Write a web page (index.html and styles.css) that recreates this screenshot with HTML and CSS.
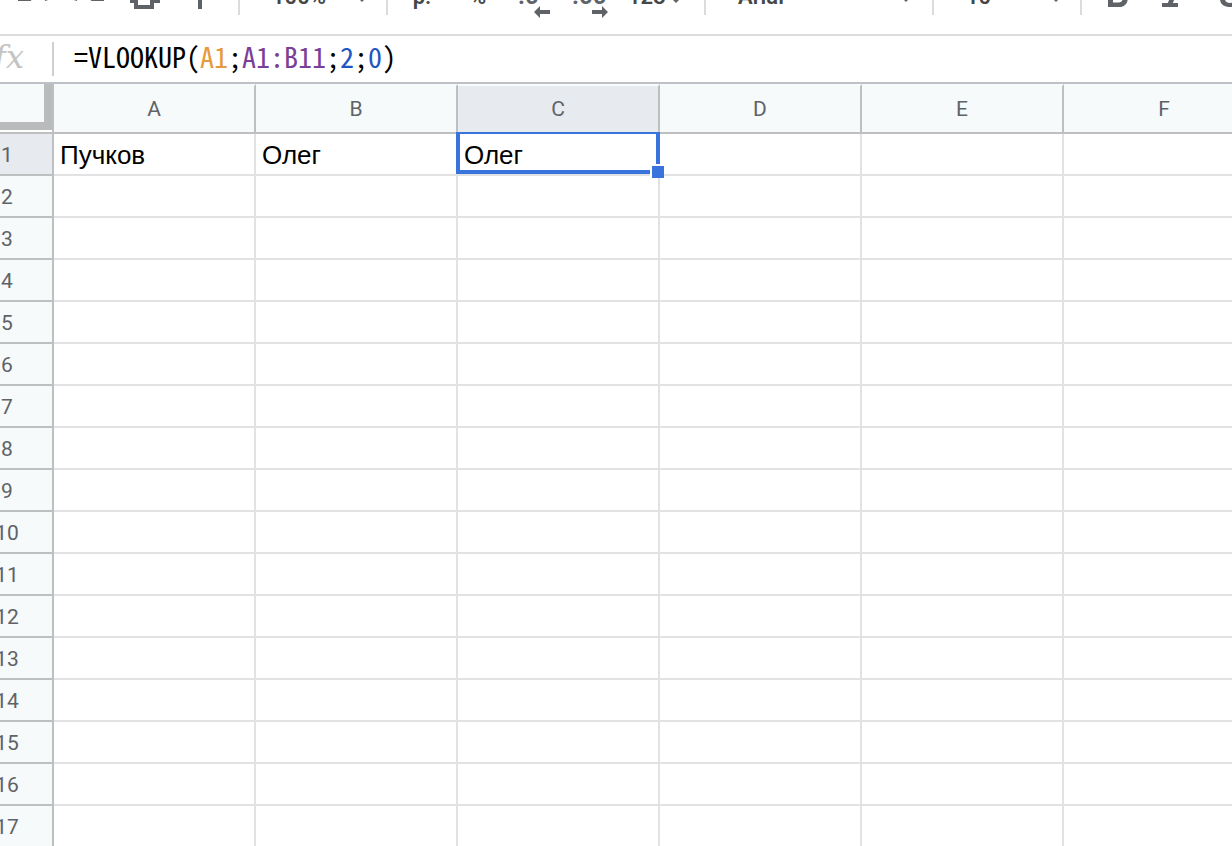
FILE: index.html
```html
<!DOCTYPE html>
<html lang="ru">
<head>
  <meta charset="UTF-8" />
  <meta name="viewport" content="width=device-width, initial-scale=1.0" />
  <title>Таблица</title>
  <link rel="stylesheet" href="styles.css">
</head>
<body>
  <div class="app">

    <!-- Toolbar -->
    <div class="toolbar" role="toolbar">
      <div class="group group-edit">
        <button class="icon-btn" aria-label="Отменить">
          <svg viewBox="0 0 24 24"><path d="M12.5 8c-2.65 0-5.05.99-6.9 2.6L2 7v9h9l-3.62-3.62c1.39-1.16 3.16-1.88 5.12-1.88 3.54 0 6.55 2.31 7.6 5.5l2.37-.78C21.08 11.03 17.15 8 12.5 8z"/></svg>
        </button>
        <button class="icon-btn" aria-label="Повторить">
          <svg viewBox="0 0 24 24"><path d="M18.4 10.6C16.55 8.99 14.15 8 11.5 8c-4.65 0-8.58 3.03-9.96 7.22L3.9 16c1.05-3.19 4.05-5.5 7.6-5.5 1.95 0 3.73.72 5.12 1.88L13 16h9V7l-3.6 3.6z"/></svg>
        </button>
        <button class="icon-btn" aria-label="Печать">
          <svg viewBox="0 0 36 36"><path fill-rule="evenodd" d="M9 4h18v6H9zM7 12h22c2.500 0 4 2 4 4v10h-6v6H7v-6H3V16c0-2 1.500-4 4-4zm4 8v8h12v-8z"/></svg>
        </button>
        <button class="icon-btn" aria-label="Копировать форматирование">
          <svg viewBox="0 0 36 36"><path d="M5 4h20v3h6v12H19v13h-4V16h13v-6h-3v4H5z"/></svg>
        </button>
      </div>
      <div class="group group-picker">
        <select class="picker" aria-label="Масштаб"><option>100%</option></select>
        <svg class="caret" viewBox="0 0 12 12"><path d="M0 6h12l-6 6z"/></svg>
      </div>
      <div class="group group-format">
        <button class="text-btn">р.</button>
        <button class="text-btn">%</button>
        <button class="text-btn" aria-label="Уменьшить число знаков">
          <span class="decimals">.0<svg class="arrow" viewBox="0 0 16 12"><path d="M0 6l6-6v4h10v4H6v4z"/></svg></span>
        </button>
        <button class="text-btn" aria-label="Увеличить число знаков">
          <span class="decimals decimals-more">.00<svg class="arrow" viewBox="0 0 16 12"><path d="M16 6l-6-6v4H0v4h10v4z"/></svg></span>
        </button>
        <button class="menu-btn">123<svg class="caret" viewBox="0 0 12 12"><path d="M0 6h12l-6 6z"/></svg></button>
      </div>
      <div class="group group-font">
        <select class="picker" aria-label="Шрифт"><option>Arial</option></select>
        <svg class="caret" viewBox="0 0 12 12"><path d="M0 6h12l-6 6z"/></svg>
      </div>
      <div class="group group-picker">
        <select class="picker" aria-label="Размер шрифта"><option>10</option></select>
        <svg class="caret" viewBox="0 0 12 12"><path d="M0 6h12l-6 6z"/></svg>
      </div>
      <div class="group group-style">
        <button class="icon-btn" aria-label="Полужирный">
          <svg viewBox="0 0 18 18"><path fill-rule="evenodd" d="M4 2h5.3c2.3 0 4 1.300 4 3.300 0 1.200-.6 2.200-1.500 2.700 1.200.5 2 1.600 2 3.100C13.800 13.500 12 15 9.700 15H4zM6.500 4.200v2.900H9c1 0 1.700-.6 1.700-1.500S10 4.200 9 4.200zm0 5v3.500h2.900c1.100 0 1.900-.7 1.900-1.700s-.8-1.800-1.900-1.800z"/></svg>
        </button>
        <button class="icon-btn" aria-label="Курсив">
          <svg viewBox="0 0 18 18"><path d="M7 2v2h2.580l-3.660 9H3v2h8v-2H8.420l3.660-9H15V2z"/></svg>
        </button>
        <button class="icon-btn" aria-label="Зачеркнутый">
          <svg viewBox="0 0 18 18"><path d="M2 8h14v2H2zM9 2c3 0 5 1.500 5 4h-2.500c0-1.200-1-2-2.500-2S6.600 4.600 6.600 5.500 7.500 7 9 7H4.500C3 4.500 5.500 2 9 2zM4 11h2.500c0 1.300 1 2 2.700 2 1.500 0 2.500-.6 2.500-2h2.400c0 2.600-2 4-4.900 4C6 15 4 13.500 4 11z"/></svg>
        </button>
      </div>
    </div>

    <!-- Formula bar -->
    <div class="formula-bar">
      <span class="fx">fx</span>
      <div class="formula" role="textbox" contenteditable="true" spellcheck="false" aria-label="Формула">=VLOOKUP(<span class="ref-orange">A1</span>;<span class="ref-purple">A1:B11</span>;<span class="number">2</span>;<span class="number">0</span>)</div>
    </div>

    <!-- Sheet -->
    <table class="sheet">
      <thead>
        <tr>
          <th class="corner"></th>
          <th>A</th><th>B</th><th class="active">C</th><th>D</th><th>E</th><th>F</th>
        </tr>
      </thead>
      <tbody>
        <tr>
          <th class="active">1</th>
          <td>Пучков</td><td>Олег</td>
          <td class="selected">Олег<span class="selection"></span><span class="handle"></span></td>
          <td></td><td></td><td></td>
        </tr>
        <tr><th>2</th><td></td><td></td><td></td><td></td><td></td><td></td></tr>
        <tr><th>3</th><td></td><td></td><td></td><td></td><td></td><td></td></tr>
        <tr><th>4</th><td></td><td></td><td></td><td></td><td></td><td></td></tr>
        <tr><th>5</th><td></td><td></td><td></td><td></td><td></td><td></td></tr>
        <tr><th>6</th><td></td><td></td><td></td><td></td><td></td><td></td></tr>
        <tr><th>7</th><td></td><td></td><td></td><td></td><td></td><td></td></tr>
        <tr><th>8</th><td></td><td></td><td></td><td></td><td></td><td></td></tr>
        <tr><th>9</th><td></td><td></td><td></td><td></td><td></td><td></td></tr>
        <tr><th>10</th><td></td><td></td><td></td><td></td><td></td><td></td></tr>
        <tr><th>11</th><td></td><td></td><td></td><td></td><td></td><td></td></tr>
        <tr><th>12</th><td></td><td></td><td></td><td></td><td></td><td></td></tr>
        <tr><th>13</th><td></td><td></td><td></td><td></td><td></td><td></td></tr>
        <tr><th>14</th><td></td><td></td><td></td><td></td><td></td><td></td></tr>
        <tr><th>15</th><td></td><td></td><td></td><td></td><td></td><td></td></tr>
        <tr><th>16</th><td></td><td></td><td></td><td></td><td></td><td></td></tr>
        <tr><th>17</th><td></td><td></td><td></td><td></td><td></td><td></td></tr>
      </tbody>
    </table>

  </div>
</body>
</html>
```
FILE: styles.css
```css
* {
  box-sizing: border-box;
}

body {
  margin: 0;
  background: #fff;
  overflow: hidden;
}

/* the view is scrolled a little past the top left corner */
.app {
  margin: -44px 0 0 -38px;
  font-family: Roboto, sans-serif;
}

button,
select {
  padding: 2px 0 0;
  border: none;
  background: none;
  color: #444746;
  font: 600 22px Roboto, sans-serif;
  cursor: pointer;
}

/* Toolbar */
.toolbar {
  display: flex;
  align-items: center;
  height: 80px;
  border-bottom: 2px solid #dadcdd;
}

.group {
  display: flex;
  align-items: center;
  flex: none;
  height: 40px;
  border-right: 2px solid #dadce0;
}

.group-edit {
  width: 278px;
  padding-left: 53px;
  gap: 20px;
}

.group-picker {
  width: 148px;
  padding: 0 18px 0 32px;
}

.group-format {
  width: 318px;
  padding-left: 6px;
}

.group-font {
  width: 228px;
  padding: 0 20px 0 32px;
}

.group-style {
  padding-left: 18px;
  gap: 20px;
  border-right: none;
}

.icon-btn {
  flex: none;
  width: 36px;
  height: 36px;
  padding: 0;
}

.icon-btn svg {
  display: block;
  width: 36px;
  height: 36px;
  fill: #5f6368;
}

.picker {
  flex: 1;
  min-width: 0;
  appearance: none;
}

.caret {
  width: 12px;
  height: 12px;
  margin-top: 2px;
  fill: #5f6368;
}

.text-btn {
  width: 56px;
}

.menu-btn {
  display: flex;
  align-items: center;
  gap: 4px;
  padding-left: 10px;
}

.decimals {
  display: inline-block;
  position: relative;
  width: 32px;
  color: #5f6368;
  font-size: 24px;
  font-weight: 700;
  text-align: left;
}

.decimals-more {
  width: 36px;
}

.arrow {
  position: absolute;
  right: 0;
  bottom: -8px;
  width: 16px;
  height: 12px;
  fill: #5f6368;
}

/* Formula bar */
.formula-bar {
  display: flex;
  align-items: center;
  height: 48px;
  border-bottom: 2px solid #bdc1c6;
}

.fx {
  flex: none;
  width: 92px;
  height: 34px;
  padding-right: 28px;
  border-right: 2px solid #d0d0d0;
  color: #c4c4c4;
  font: italic 32px/30px "DejaVu Serif", serif;
  text-align: right;
}

.formula {
  flex: 1;
  padding: 0 0 6px 20px;
  color: #000;
  font: 28px/40px "Noto Sans Mono CJK SC", "DejaVu Sans Mono", monospace;
  outline: none;
}

.ref-orange {
  color: #e69a3c;
}

.ref-purple {
  color: #7b3f98;
}

.number {
  color: #1f56c4;
}

/* Sheet */
.sheet {
  width: 1304px;
  table-layout: fixed;
  border-collapse: separate;
  border-spacing: 0;
}

.sheet th,
.sheet td {
  width: 202px;
  height: 42px;
  padding: 2px 0 0;
  border: 0 solid #e1e2e3;
  border-width: 0 2px 2px 0;
}

.sheet th {
  background: #f6fafb;
  border-color: #bdbfc1;
  color: #5f6368;
  font: 400 21px Roboto, sans-serif;
}

.sheet th:first-child {
  width: 92px;
}

.sheet thead th {
  height: 50px;
  padding: 0;
  border-top: 2px solid #f8fbfc;
}

.sheet th.active {
  background: #e7eaee;
}

.sheet thead .corner {
  border-top: none;
  box-shadow: inset 0 -2px #fff, inset -8px -10px #b9bbbd;
}

.sheet td {
  padding-left: 6px;
  color: #000;
  font: 26px "Liberation Sans", Arial, sans-serif;
}

.selected {
  position: relative;
}

.selection {
  position: absolute;
  top: -2px;
  right: -2px;
  bottom: 0;
  left: -2px;
  border: 4px solid #3874dc;
  border-top-width: 2px;
}

.handle {
  position: absolute;
  right: -6px;
  bottom: -4px;
  width: 14px;
  height: 14px;
  background: #3874dc;
  border: 0 solid #fff;
  border-width: 2px 0 0 2px;
}
```
